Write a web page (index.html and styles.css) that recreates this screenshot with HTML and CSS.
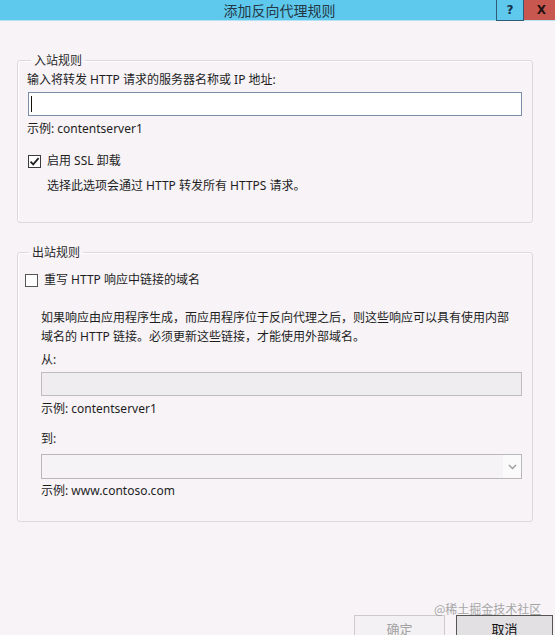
FILE: index.html
```html
<!DOCTYPE html>
<html lang="zh-CN">
<head>
<meta charset="utf-8">
<title>添加反向代理规则</title>
<link rel="stylesheet" href="styles.css">
</head>
<body>
<div class="dialog">
  <header class="titlebar">
    <span class="title">添加反向代理规则</span>
    <div class="ctrls">
      <span class="btn-help">?</span>
      <span class="btn-close">X</span>
    </div>
  </header>

  <main class="content">
    <fieldset class="group group-in">
      <legend class="legend">入站规则</legend>
      <div class="label">输入将转发 HTTP 请求的服务器名称或 IP 地址:</div>
      <div class="input input-focus"><span class="caret"></span></div>
      <div class="hint">示例: contentserver1</div>
      <div class="check-row check-row-in">
        <span class="cbox">
          <svg width="11" height="11" viewBox="0 0 11 11"><path d="M1.5 5.6 L4.2 8.4 L9.6 2.2" fill="none" stroke="#222" stroke-width="1.8"/></svg>
        </span>
        <span class="check-label">启用 SSL 卸载</span>
      </div>
      <div class="desc">选择此选项会通过 HTTP 转发所有 HTTPS 请求。</div>
    </fieldset>

    <fieldset class="group group-out">
      <legend class="legend">出站规则</legend>
      <div class="check-row check-row-out">
        <span class="cbox"></span>
        <span class="check-label">重写 HTTP 响应中链接的域名</span>
      </div>
      <div class="indent">
        <p class="para">如果响应由应用程序生成，而应用程序位于反向代理之后，则这些响应可以具有使用内部<br>域名的 HTTP 链接。必须更新这些链接，才能使用外部域名。</p>
        <div class="label label-from">从:</div>
        <div class="input input-disabled"></div>
        <div class="hint">示例: contentserver1</div>
        <div class="label label-to">到:</div>
        <div class="select">
          <span class="select-arrow">
            <svg width="9" height="6" viewBox="0 0 9 6"><path d="M1 1 L4.5 4.5 L8 1" fill="none" stroke="#9a9a9a" stroke-width="1.3"/></svg>
          </span>
        </div>
        <div class="hint hint-last">示例: www.contoso.com</div>
      </div>
    </fieldset>

    <div class="buttons">
      <span class="button button-ok">确定</span>
      <span class="button button-cancel">取消</span>
    </div>
    <span class="watermark">@稀土掘金技术社区</span>
  </main>
</div>
</body>
</html>
```
FILE: styles.css
```css
* { box-sizing: border-box; }

html, body {
  margin: 0;
  padding: 0;
  width: 555px;
  height: 635px;
  overflow: hidden;
  background: #f7f3f7;
}

body {
  font-family: "Noto Sans", "Noto Sans CJK SC", sans-serif;
  font-size: 12px;
  color: #1e1e1e;
}

.dialog {
  display: flex;
  flex-direction: column;
  height: 635px;
}

.titlebar {
  position: relative;
  height: 30px;
  background: #5ec9ed;
  border-bottom: 1px solid #b6e1f2;
  display: flex;
  align-items: center;
  justify-content: center;
}

.title {
  font-family: "Noto Sans CJK SC", sans-serif;
  font-size: 14px;
  color: #243846;
  margin-left: 4px;
}

.ctrls {
  position: absolute;
  top: 0;
  right: 0;
  display: flex;
}

.btn-help {
  width: 28px;
  height: 21px;
  border: 1px solid #2f5b74;
  border-top: none;
  background: #5ec9ed;
  color: #15304a;
  font-family: "DejaVu Sans", sans-serif;
  font-weight: bold;
  font-size: 12px;
  display: flex;
  align-items: center;
  justify-content: center;
}

.btn-close {
  width: 31px;
  height: 20px;
  background: #c8584f;
  color: #231010;
  font-family: "DejaVu Sans", sans-serif;
  font-weight: bold;
  font-size: 12px;
  display: flex;
  align-items: center;
  justify-content: center;
  padding-left: 4px;
}

.content {
  position: relative;
  flex: 1;
  display: flex;
  flex-direction: column;
  padding-top: 31px;
}

.group {
  margin: 0 22px 0 17px;
  border: 1px solid #dcd9dd;
  border-radius: 3px;
  box-shadow: inset 1px 1px 0 #ffffff;
  min-width: 0;
}

.legend {
  padding: 0 3px;
  margin-left: 4px;
  line-height: 16px;
  color: #2a2a2a;
  font-family: "Noto Sans CJK SC", sans-serif;
}

.group-in {
  padding: 4px 10px 28px 9px;
}

.group-out {
  margin-top: 21px;
  padding: 12px 10px 22px 7px;
}

.label {
  line-height: 16px;
}

.input {
  position: relative;
  height: 24px;
  margin-top: 4px;
}

.input-focus {
  margin-left: 1px;
  background: #ffffff;
  border: 1px solid #7b8ea8;
}

.caret {
  position: absolute;
  left: 2px;
  top: 3px;
  width: 1px;
  height: 16px;
  background: #111;
}

.input-disabled {
  background: #efedef;
  border: 1px solid #bebcbe;
}

.hint {
  margin-top: 5px;
  line-height: 16px;
}

.check-row {
  display: flex;
  align-items: center;
  gap: 6px;
  line-height: 16px;
}

.check-row-in {
  margin-top: 16px;
  margin-left: 1px;
}

.cbox {
  width: 13px;
  height: 13px;
  border: 1px solid #3a3a3a;
  background: #ffffff;
  display: flex;
  align-items: center;
  justify-content: center;
}

.check-row-out .cbox {
  border-color: #555;
}

.desc {
  margin-top: 9px;
  margin-left: 20px;
  line-height: 16px;
}

.indent {
  margin-left: 16px;
}

.para {
  margin: 20px 0 0 0;
  line-height: 19px;
}

.label-from {
  margin-top: 6px;
}

.label-to {
  margin-top: 14px;
}

.select {
  margin-top: 7px;
  height: 25px;
  background: #f5f3f5;
  border: 1px solid #b9b7b9;
  display: flex;
  justify-content: flex-end;
}

.select-arrow {
  width: 18px;
  background: #fbfafb;
  display: flex;
  align-items: center;
  justify-content: center;
}

.hint-last {
  margin-top: 4px;
}

.buttons {
  margin-top: 93px;
  display: flex;
  justify-content: flex-end;
  gap: 11px;
  padding-right: 2px;
}

.button {
  height: 28px;
  line-height: 26px;
  text-align: center;
  font-family: "Noto Sans CJK SC", sans-serif;
  font-size: 13px;
}

.button-ok {
  width: 91px;
  border: 1px solid #cccacc;
  background: #f3f1f3;
  color: #a3a3a3;
}

.button-cancel {
  width: 97px;
  border: 1px solid #555555;
  background: #e2e0e2;
  color: #111111;
}

.watermark {
  position: absolute;
  left: 434px;
  top: 580px;
  font-family: "Noto Sans CJK SC", sans-serif;
  font-size: 12px;
  color: rgba(150, 150, 150, 0.85);
  line-height: 16px;
}
```
